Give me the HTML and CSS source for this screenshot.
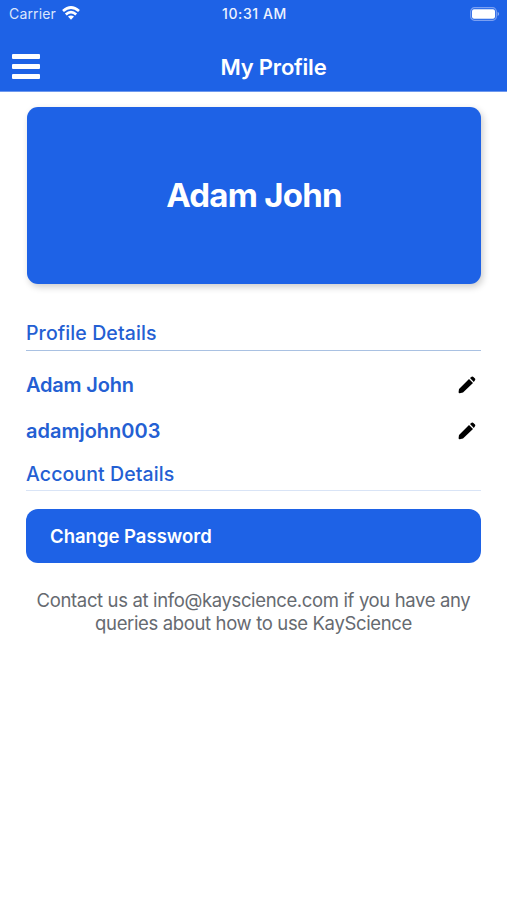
FILE: index.html
```html
<!DOCTYPE html>
<html lang="en">
<head>
<meta charset="utf-8">
<title>My Profile</title>
<link rel="stylesheet" href="styles.css">
</head>
<body>
<header class="top">
  <div class="status">
    <div class="carrier"><span class="t carrier-name">Carrier</span>
      <svg class="wifi" width="18" height="14" viewBox="0 0 18 14" fill="none" stroke="#fff" stroke-width="2.7"><path d="M1 5Q9-2 17 5M3.8 8.5Q9 3.9 14.2 8.5"/><path d="M6 10.6Q9 8.3 12 10.6L9 13.8Z" fill="#fff" stroke="none"/></svg>
    </div>
    <span class="t time">10:31 AM</span>
    <svg class="battery" width="30" height="14" viewBox="0 0 30 14"><rect x=".7" y=".7" width="25.6" height="12.6" rx="3.8" fill="none" stroke="#7ba0f2" stroke-width="1.2"/><rect x="2" y="2.2" width="23" height="9.6" rx="2" fill="#fff"/><path d="M27.6 4.8q3 2.2 0 4.4z" fill="#8faef2"/></svg>
  </div>
  <div class="bar">
    <svg class="menu" width="28" height="25" viewBox="0 0 28 25" fill="#fff"><rect width="28" height="5" rx="1"/><rect y="10" width="28" height="5" rx="1"/><rect y="20" width="28" height="5" rx="1"/></svg>
    <h1 class="t title">My Profile</h1>
  </div>
</header>
<main>
  <section class="card"><span class="t card-name">Adam John</span></section>
  <h2 class="section profile"><span class="t">Profile Details</span></h2>
  <div class="row"><span class="t name">Adam John</span><svg class="pen" width="18" height="18" viewBox="0 0 18 18"><path d="M11 3 15 7 5 16.6 1.8 17.2Q.5 17.3.6 16L1 13ZM12 2.1 13.6.8Q14.6.1 15.4 1L17 2.6Q17.7 3.4 17 4.3L15.8 6Z"/></svg></div>
  <div class="row"><span class="t user">adamjohn003</span><svg class="pen" width="18" height="18" viewBox="0 0 18 18"><path d="M11 3 15 7 5 16.6 1.8 17.2Q.5 17.3.6 16L1 13ZM12 2.1 13.6.8Q14.6.1 15.4 1L17 2.6Q17.7 3.4 17 4.3L15.8 6Z"/></svg></div>
  <h2 class="section account"><span class="t">Account Details</span></h2>
  <button class="change"><span class="t">Change Password</span></button>
  <p class="contact"><span class="t l1">Contact us at info@kayscience.com if you have any</span><br><span class="t l2">queries about how to use KayScience</span></p>
</main>
</body>
</html>
```
FILE: styles.css
```css
*{box-sizing:border-box}
body{margin:0;background:#fff;font-family:Inter,"Liberation Sans",sans-serif;color:#245fd3}
h1,h2,p{margin:0}
.t{white-space:nowrap}
.top{height:92px;background:#1e62e6;color:#fff;border-bottom:1px solid #6d98ee}
.status{height:27px;display:grid;grid-template-columns:1fr auto 1fr;align-items:center;padding:0 7px 0 9px;font-size:14px}
.carrier{display:flex;align-items:center;gap:6px}
.carrier-name{letter-spacing:.15px;color:#dbe6fc}
.wifi{margin-top:-1px}
.time{font-weight:500;letter-spacing:.6px;color:#eef3fe}
.battery{justify-self:end}
.bar{height:64px;display:grid;grid-template-columns:28px 1fr;align-items:center;padding:15px 0 0 12px}
.menu{margin-top:-1px}
.title{font-size:22px;font-weight:600;line-height:28px;text-align:center;letter-spacing:-.2px}
main{padding:15px 26px 0}
.card{height:177px;margin:0 0 0 1px;background:#1e62e6;border-radius:11px;box-shadow:2px 3px 7px #0003;display:flex;align-items:center;justify-content:center;padding-bottom:2px;color:#fff;font-size:33px;font-weight:700;letter-spacing:-.75px}
.section{font-size:19.5px;font-weight:500;line-height:27px;letter-spacing:.1px}
.profile{height:31px;margin-top:36px;border-bottom:1px solid #a9c1e2;margin-bottom:11px}
.row{height:46px;display:flex;align-items:center;justify-content:space-between;padding-right:5px;font-size:20px;font-weight:600}
.name{letter-spacing:-.2px}
.pen{margin-top:-1px}
.account{height:31px;margin-top:6px;border-bottom:1px solid #d9e4f6}
.account .t{position:relative;top:1px}
.change{display:flex;align-items:center;width:100%;height:54px;margin-top:18px;padding:0 24px 1px;border:0;border-radius:12px;background:#1e62e6;color:#fff;font:600 18.5px Inter,sans-serif}
.contact{margin-top:26px;text-align:center;color:#666a70;font-size:18.5px;line-height:22.5px;letter-spacing:-.36px}
```
